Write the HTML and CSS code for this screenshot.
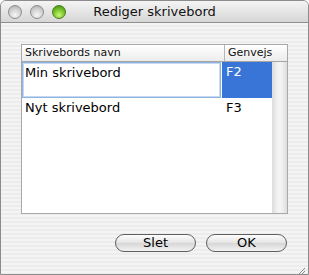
FILE: index.html
```html
<!DOCTYPE html>
<html lang="da">
<head>
    <meta charset="UTF-8">
    <title>Rediger skrivebord</title>
    <link rel="stylesheet" href="styles.css">
</head>
<body>
    <div class="window">
        <div class="titlebar">
            <div class="lights">
                <span class="light"></span>
                <span class="light"></span>
                <span class="light green"></span>
            </div>
            <div class="title">Rediger skrivebord</div>
        </div>
        <div class="content">
            <div class="table">
                <div class="head">
                    <div class="col-name">Skrivebords navn</div>
                    <div class="col-key">Genvejs</div>
                </div>
                <div class="rows-wrap">
                    <div class="rows">
                        <div class="row first">
                            <div class="cell-name"><div class="editor">Min skrivebord</div></div>
                            <div class="cell-key selected">F2</div>
                        </div>
                        <div class="row">
                            <div class="cell-name">Nyt skrivebord</div>
                            <div class="cell-key">F3</div>
                        </div>
                    </div>
                    <div class="scroll"></div>
                </div>
            </div>
            <div class="buttons">
                <button class="btn">Slet</button>
                <button class="btn">OK</button>
            </div>
        </div>
        <div class="grip">
            <svg width="10" height="10" viewBox="0 0 10 10">
                <path d="M9 1 L1 9 M9 4 L4 9 M9 7 L7 9" stroke="#8a8a8a" stroke-width="1"/>
            </svg>
        </div>
    </div>
</body>
</html>
```

FILE: styles.css
```css
body {
    margin: 0;
    font-family: "DejaVu Sans", "Liberation Sans", sans-serif;
    background: #ffffff;
}
.window {
    position: relative;
    width: 309px;
    height: 275px;
    box-sizing: border-box;
    border: 1px solid #8c8c8c;
    border-radius: 6px 6px 0 0;
    overflow: hidden;
    background: repeating-linear-gradient(#ececec 0, #ececec 2px, #f4f4f4 2px, #f4f4f4 4px);
    display: flex;
    flex-direction: column;
}
.titlebar {
    height: 21px;
    flex: none;
    border-bottom: 1px solid #8f8f8f;
    background: linear-gradient(#f4f4f4, #d6d6d6);
    display: flex;
    align-items: center;
    position: relative;
}
.lights {
    display: flex;
    gap: 8px;
    padding-left: 7px;
}
.light {
    width: 14px;
    height: 14px;
    border-radius: 50%;
    box-sizing: border-box;
    border: 1px solid #8d8d8d;
    background: radial-gradient(circle at 50% 75%, #f6f6f6 0, #d0d0d0 55%, #a9a9a9 100%);
}
.light.green {
    border-color: #4b7a1c;
    background: radial-gradient(circle at 50% 75%, #c9f57a 0, #79c52c 50%, #3f8a12 100%);
}
.title {
    position: absolute;
    left: 0;
    right: 0;
    text-align: center;
    font-size: 13px;
    color: #111;
}
.content {
    flex: 1;
    padding: 21px 20px 0 20px;
    display: flex;
    flex-direction: column;
}
.table {
    width: 267px;
    height: 170px;
    box-sizing: border-box;
    border: 1px solid #a9a9a9;
    background: #ffffff;
    display: flex;
    flex-direction: column;
}
.head {
    display: flex;
    height: 16px;
    flex: none;
    border-bottom: 1px solid #a5a5a5;
    background: linear-gradient(#ffffff, #ececec);
    font-size: 11px;
    color: #111;
}
.col-name {
    width: 199px;
    border-right: 1px solid #b5b5b5;
    padding-left: 3px;
    line-height: 16px;
}
.col-key {
    flex: 1;
    padding-left: 3px;
    line-height: 16px;
}
.rows-wrap {
    flex: 1;
    display: flex;
}
.rows {
    flex: 1;
}
.scroll {
    width: 15px;
    background: linear-gradient(90deg, #dcdcdc, #f4f4f4 40%, #f4f4f4 60%, #dedede);
}
.row {
    display: flex;
    height: 20px;
    font-size: 13px;
    color: #000;
}
.row.first {
    height: 36px;
}
.cell-name {
    width: 199px;
    padding: 2px 3px;
    box-sizing: border-box;
}
.row.first .cell-name {
    padding: 0;
}
.editor {
    height: 36px;
    box-sizing: border-box;
    border: 1px solid #8fb4e0;
    box-shadow: inset 0 0 0 1px #c4d8f1;
    padding: 2px 2px;
}
.cell-key {
    flex: 1;
    padding: 2px 4px;
}
.cell-key.selected {
    background: #3875d7;
    color: #ffffff;
    margin-left: 1px;
}
.row:not(.first) .cell-key {
    margin-left: 1px;
}
.buttons {
    display: flex;
    justify-content: flex-end;
    gap: 10px;
    margin-top: 20px;
    padding-right: 1px;
}
.btn {
    width: 81px;
    height: 18px;
    border: 1px solid #5f5f5f;
    border-radius: 9px;
    background: linear-gradient(#fdfdfd, #e4e4e4 50%, #d6d6d6 51%, #f2f2f2);
    font-family: "DejaVu Sans", "Liberation Sans", sans-serif;
    font-size: 13px;
    color: #000;
    padding: 0;
    line-height: 16px;
}
.grip {
    position: absolute;
    right: 2px;
    bottom: 2px;
    width: 10px;
    height: 10px;
}
```
